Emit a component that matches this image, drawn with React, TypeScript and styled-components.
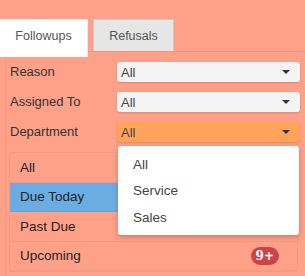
import React, { FC } from 'react';
import styled, { createGlobalStyle } from 'styled-components';

const GlobalStyle = createGlobalStyle`
    html, body {
        margin: 0;
        padding: 0;
        background: #ffa089;
        font-family: 'Liberation Sans', Arial, sans-serif;
    }
`;

const Page = styled.div`
    width: 305px;
    height: 276px;
    position: relative;
    overflow: hidden;
`;

const Tabs = styled.div`
    display: flex;
    align-items: flex-start;
    padding-top: 19px;
    position: relative;
    z-index: 2;
`;

const Tab = styled.div<{ active?: boolean }>`
    box-sizing: border-box;
    display: flex;
    align-items: center;
    justify-content: center;
    font-size: 12.5px;
    color: #555;
    width: ${(p) => (p.active ? '88px' : '81px')};
    height: ${(p) => (p.active ? '38px' : '32px')};
    margin-left: ${(p) => (p.active ? '0' : '5px')};
    padding-bottom: ${(p) => (p.active ? '5px' : '0')};
    background: ${(p) => (p.active ? '#ffffff' : '#e6e6e6')};
    border: 1px solid ${(p) => (p.active ? 'rgba(0,0,0,0.08)' : 'rgba(0,0,0,0.12)')};
    border-left: ${(p) => (p.active ? 'none' : '1px solid rgba(0,0,0,0.12)')};
    border-bottom: none;
`;

const Panel = styled.div`
    margin: -6px 0 0 5px;
    padding: 10px 7px 0 4px;
    border-top: 1px solid rgba(0, 0, 0, 0.07);
    border-left: 1px solid rgba(0, 0, 0, 0.05);
    height: 230px;
    box-sizing: border-box;
    position: relative;
    z-index: 1;
`;

const Filters = styled.div`
    display: flex;
    flex-direction: column;
    gap: 10px;
    padding-right: 0;
    margin-right: -2px;
`;

const FilterRow = styled.div`
    display: flex;
    align-items: center;
    height: 20px;
`;

const Label = styled.div`
    width: 107px;
    font-size: 13px;
    color: #333;
    margin-top: -2px;
`;

const Select = styled.div<{ focused?: boolean }>`
    box-sizing: border-box;
    width: 183px;
    height: 20px;
    border-radius: 3px;
    display: flex;
    align-items: center;
    justify-content: space-between;
    padding: 0 10px 0 4px;
    font-size: 13px;
    color: #444;
    background: ${(p) => (p.focused ? '#ffa35b' : '#f4f4f4')};
    box-shadow: ${(p) =>
        p.focused ? '0 1px 2px rgba(180, 80, 40, 0.35)' : '0 1px 2px rgba(120, 60, 40, 0.25)'};
`;

const Caret = styled.span`
    width: 0;
    height: 0;
    border-left: 4px solid transparent;
    border-right: 4px solid transparent;
    border-top: 4px solid #333;
`;

const List = styled.div`
    margin: 10px 0 0 -1px;
    border: 1px solid rgba(0, 0, 0, 0.04);
    border-radius: 3px;
`;

const Item = styled.div<{ active?: boolean }>`
    box-sizing: border-box;
    height: 29.5px;
    display: flex;
    align-items: center;
    justify-content: space-between;
    padding: 0 18px 0 10px;
    font-size: 13.5px;
    color: #222;
    background: ${(p) => (p.active ? '#6aade2' : 'transparent')};
    border-bottom: 1px solid rgba(0, 0, 0, 0.04);
`;

const Badge = styled.span`
    background: #c9454a;
    color: #fff;
    font-family: 'DejaVu Serif', 'Liberation Serif', serif;
    font-weight: bold;
    font-size: 12px;
    border-radius: 9px;
    height: 18px;
    min-width: 27px;
    box-sizing: border-box;
    padding: 0 5px;
    display: flex;
    align-items: center;
    justify-content: center;
`;

const Menu = styled.div`
    position: absolute;
    left: 118px;
    top: 146px;
    width: 181px;
    box-sizing: border-box;
    padding: 5px 0 4px;
    background: #fff;
    border-radius: 3px;
    box-shadow: 0 2px 5px rgba(120, 50, 30, 0.35);
    z-index: 3;
`;

const MenuItem = styled.div`
    height: 26.5px;
    display: flex;
    align-items: center;
    padding-left: 15px;
    font-size: 13.5px;
    color: #444;
`;

const filters = [
    { label: 'Reason', value: 'All' },
    { label: 'Assigned To', value: 'All' },
    { label: 'Department', value: 'All', focused: true },
];

const items = [
    { label: 'All' },
    { label: 'Due Today', active: true },
    { label: 'Past Due', badge: '9+' },
    { label: 'Upcoming', badge: '9+' },
];

const App: FC = () => (
    <Page>
        <GlobalStyle />
        <Tabs>
            <Tab active>Followups</Tab>
            <Tab>Refusals</Tab>
        </Tabs>
        <Panel>
            <Filters>
                {filters.map((f) => (
                    <FilterRow key={f.label}>
                        <Label>{f.label}</Label>
                        <Select focused={f.focused}>
                            {f.value}
                            <Caret />
                        </Select>
                    </FilterRow>
                ))}
            </Filters>
            <List>
                {items.map((it) => (
                    <Item key={it.label} active={it.active}>
                        {it.label}
                        {it.badge && <Badge>{it.badge}</Badge>}
                    </Item>
                ))}
            </List>
        </Panel>
        <Menu>
            <MenuItem>All</MenuItem>
            <MenuItem>Service</MenuItem>
            <MenuItem>Sales</MenuItem>
        </Menu>
    </Page>
);

export default App;
